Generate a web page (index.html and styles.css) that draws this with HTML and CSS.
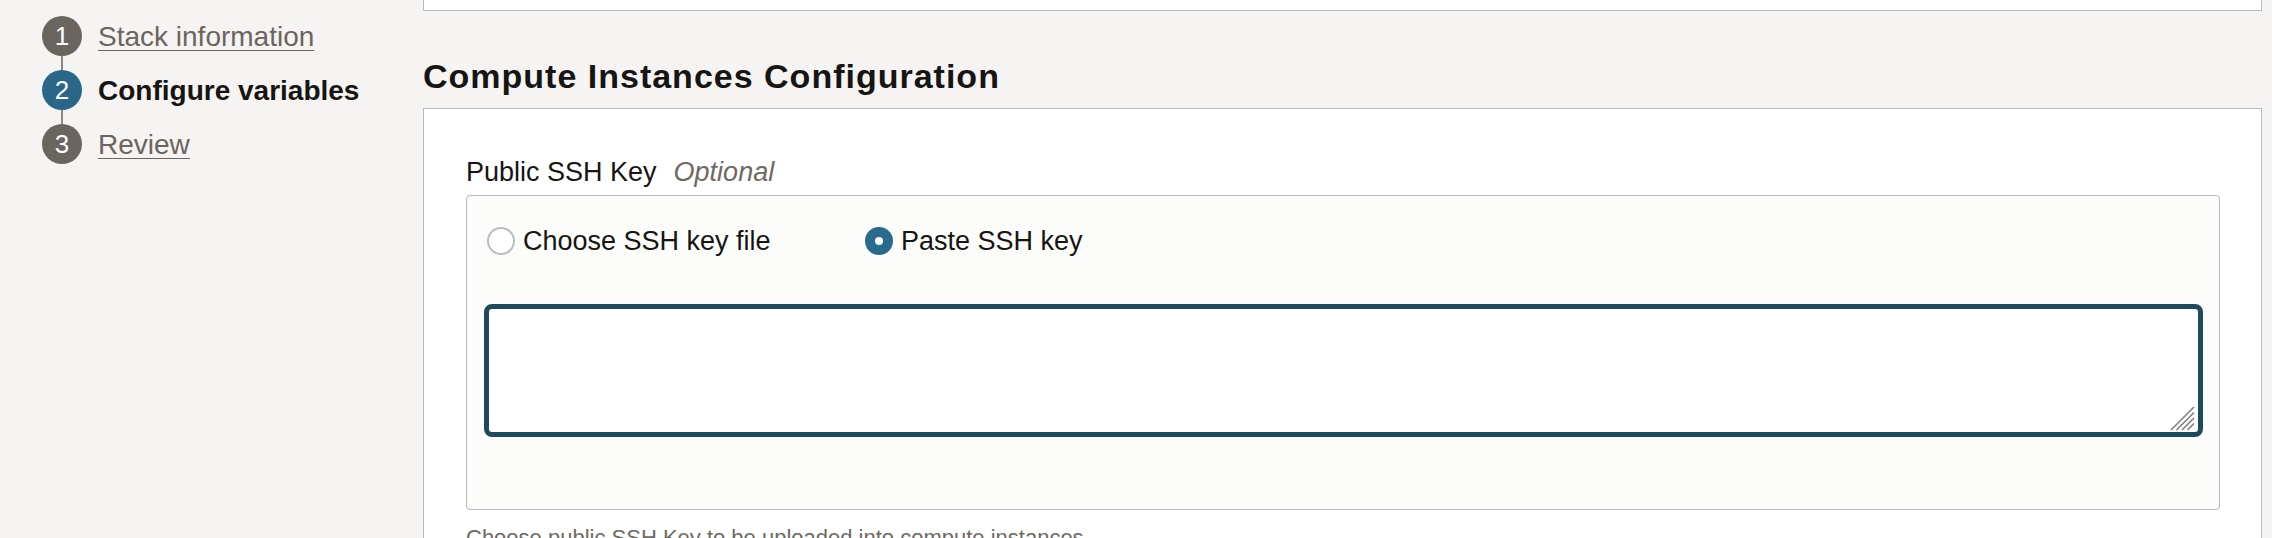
FILE: index.html
```html
<!DOCTYPE html>
<html lang="en">
<head>
<meta charset="utf-8">
<title>Configure variables</title>
<link rel="stylesheet" href="styles.css">
</head>
<body>
<div class="page">
  <nav class="steps">
    <div class="step">
      <span class="step-num done">1</span>
      <a class="step-link" href="#">Stack information</a>
    </div>
    <div class="connector"></div>
    <div class="step">
      <span class="step-num active">2</span>
      <span class="step-current">Configure variables</span>
    </div>
    <div class="connector"></div>
    <div class="step">
      <span class="step-num done">3</span>
      <a class="step-link" href="#">Review</a>
    </div>
  </nav>
  <main class="main">
    <div class="prev-card"></div>
    <h2 class="section-title">Compute Instances Configuration</h2>
    <section class="card">
      <div class="field-label">Public SSH Key<span class="optional">Optional</span></div>
      <div class="field-box" role="radiogroup">
        <div class="radio-row">
          <label class="radio-option">
            <span class="radio"></span>
            <span class="radio-text">Choose SSH key file</span>
          </label>
          <label class="radio-option">
            <span class="radio checked"></span>
            <span class="radio-text">Paste SSH key</span>
          </label>
        </div>
        <div class="textarea-wrap">
          <textarea class="key-input" aria-label="Public SSH Key"></textarea>
          <svg class="grip" width="26" height="26" viewBox="0 0 26 26" aria-hidden="true">
            <line x1="2" y1="25" x2="25" y2="2"/>
            <line x1="7.5" y1="25" x2="25" y2="7.5"/>
            <line x1="13" y1="25" x2="25" y2="13"/>
            <line x1="18.5" y1="25" x2="25" y2="18.5"/>
          </svg>
        </div>
      </div>
      <p class="help">Choose public SSH Key to be uploaded into compute instances.</p>
    </section>
  </main>
</div>
</body>
</html>
```
FILE: styles.css
```css
html, body {
  margin: 0;
  padding: 0;
  background: #f5f4f2;
  height: 538px;
  overflow: hidden;
}

body {
  font-family: "Liberation Sans", Arial, Helvetica, sans-serif;
  color: #161513;
}

.page {
  display: flex;
  align-items: flex-start;
}

/* ---------- steps ---------- */
.steps {
  width: 381px;
  flex: 0 0 381px;
  padding: 16px 0 0 42px;
  display: flex;
  flex-direction: column;
}

.step {
  display: flex;
  align-items: center;
  gap: 16px;
  height: 40px;
}

.step-num {
  width: 40px;
  height: 40px;
  border-radius: 50%;
  display: flex;
  align-items: center;
  justify-content: center;
  color: #ffffff;
  font-size: 26px;
  line-height: 1;
  flex: 0 0 40px;
}

.step-num.done {
  background: #6b6560;
}

.step-num.active {
  background: #2a6688;
}

.step-link,
.step-current {
  font-size: 28px;
  line-height: 40px;
  position: relative;
  top: 1px;
}

.step-link {
  color: #6b6560;
  text-decoration: underline;
  text-decoration-thickness: 1px;
  text-underline-offset: 4px;
}

.step-current {
  font-weight: bold;
  color: #161513;
}

.connector {
  width: 2px;
  height: 14px;
  margin-left: 19px;
  background: #8c8681;
}

/* ---------- main ---------- */
.main {
  flex: 1 1 auto;
  padding-right: 10px;
  min-width: 0;
}

.prev-card {
  height: 10px;
  background: #ffffff;
  border: 1px solid #b6bac0;
  border-top: 0;
}

.section-title {
  margin: 45px 0 12px 0;
  font-size: 34px;
  line-height: 40px;
  font-weight: bold;
  letter-spacing: 1px;
  color: #161513;
}

.card {
  background: #ffffff;
  border: 1px solid #b6bac0;
  border-bottom: 0;
  padding: 47px 41px 40px 42px;
}

.field-label {
  font-size: 27px;
  line-height: 32px;
  color: #161513;
  margin-bottom: 7px;
}

.optional {
  font-style: italic;
  color: #6f6964;
  margin-left: 17px;
}

.field-box {
  border: 1px solid #bcb8b3;
  border-radius: 4px;
  background: #fcfcfb;
  padding: 29px 16px 72px 17px;
}

.radio-row {
  display: grid;
  grid-template-columns: 378px auto;
  justify-content: start;
  margin-left: 3px;
}

.radio-option {
  display: flex;
  align-items: center;
  gap: 8px;
  height: 32px;
}

.radio {
  width: 28px;
  height: 28px;
  box-sizing: border-box;
  border-radius: 50%;
  border: 2px solid #b8bec5;
  background: #ffffff;
  flex: 0 0 28px;
  display: flex;
  align-items: center;
  justify-content: center;
}

.radio.checked {
  border-color: #2a6a8c;
  background: #2a6a8c;
}

.radio.checked::after {
  content: "";
  width: 8px;
  height: 8px;
  border-radius: 50%;
  background: #ffffff;
}

.radio-text {
  font-size: 27px;
  line-height: 32px;
  color: #161513;
}

.textarea-wrap {
  position: relative;
  margin-top: 47px;
}

.key-input {
  display: block;
  width: 100%;
  height: 133px;
  box-sizing: border-box;
  border: 5px solid #1e4a5f;
  border-radius: 8px;
  background: #ffffff;
  resize: none;
  outline: none;
  margin: 0;
  padding: 8px 12px;
  font-family: "Liberation Mono", monospace;
  font-size: 20px;
}

.grip {
  position: absolute;
  right: 8px;
  bottom: 6px;
}

.grip line {
  stroke: #7d7d7d;
  stroke-width: 1.6;
}

.help {
  margin: 14px 0 0 0;
  font-size: 22px;
  line-height: 28px;
  color: #6f6964;
}
```
